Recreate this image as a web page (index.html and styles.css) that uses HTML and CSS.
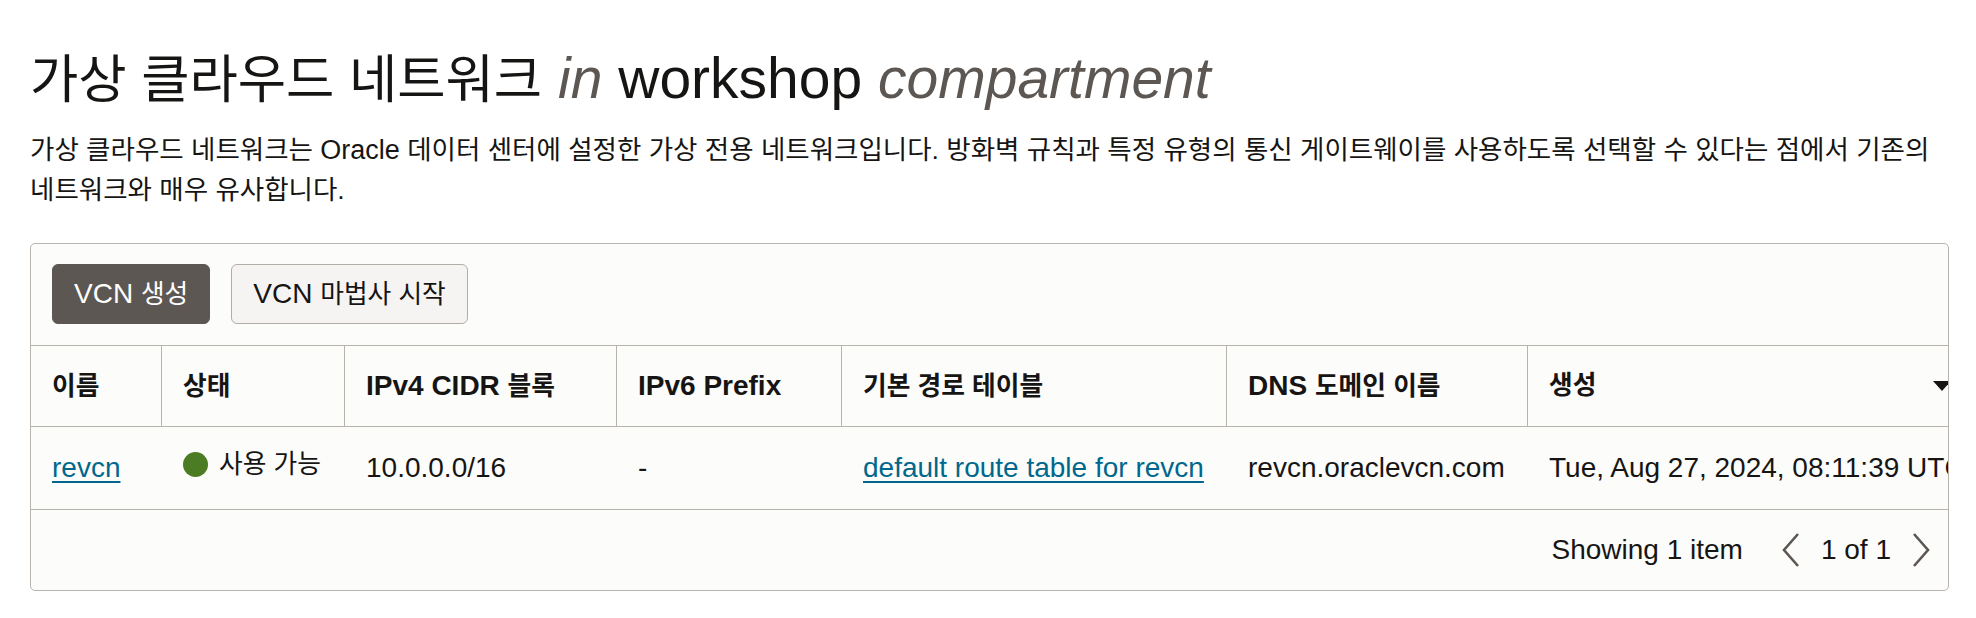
FILE: index.html
```html
<!DOCTYPE html>
<html lang="ko">
<head>
<meta charset="utf-8">
<title>가상 클라우드 네트워크</title>
<link rel="stylesheet" href="styles.css">
</head>
<body>
<div class="page">
  <h1 class="title"><span class="ko">가상 클라우드 네트워크</span> <em>in</em> workshop <em>compartment</em></h1>
  <p class="desc">가상 클라우드 네트워크는 <span class="en">Oracle</span> 데이터 센터에 설정한 가상 전용 네트워크입니다. 방화벽 규칙과 특정 유형의 통신 게이트웨이를 사용하도록 선택할 수 있다는 점에서 기존의 네트워크와 매우 유사합니다.</p>

  <div class="card">
    <div class="toolbar">
      <button class="btn btn-primary">VCN <span class="ko">생성</span></button>
      <button class="btn btn-secondary">VCN <span class="ko">마법사 시작</span></button>
    </div>

    <div class="table-wrap">
      <table class="grid">
        <colgroup>
          <col class="c-name">
          <col class="c-state">
          <col class="c-ipv4">
          <col class="c-ipv6">
          <col class="c-route">
          <col class="c-dns">
          <col class="c-created">
        </colgroup>
        <thead>
          <tr>
            <th><span class="ko">이름</span></th>
            <th><span class="ko">상태</span></th>
            <th>IPv4 CIDR <span class="ko">블록</span></th>
            <th>IPv6 Prefix</th>
            <th><span class="ko">기본 경로 테이블</span></th>
            <th>DNS <span class="ko">도메인 이름</span></th>
            <th class="th-last">
              <div class="th-inner">
                <span class="ko">생성</span>
                <svg class="sort" width="18" height="10" viewBox="0 0 18 10"><polygon points="0,0 18,0 9,10"/></svg>
              </div>
            </th>
          </tr>
        </thead>
        <tbody>
          <tr>
            <td><a href="#" class="link">revcn</a></td>
            <td><span class="status"><span class="dot"></span><span class="ko">사용 가능</span></span></td>
            <td>10.0.0.0/16</td>
            <td>-</td>
            <td><a href="#" class="link">default route table for revcn</a></td>
            <td>revcn.oraclevcn.com</td>
            <td>Tue, Aug 27, 2024, 08:11:39 UTC</td>
          </tr>
        </tbody>
      </table>
    </div>

    <div class="footer">
      <span class="count">Showing 1 item</span>
      <div class="pager">
        <svg class="chev" width="18" height="34" viewBox="0 0 18 34"><polyline points="16,1 2,17 16,33"/></svg>
        <span class="pages">1 of 1</span>
        <svg class="chev" width="18" height="34" viewBox="0 0 18 34"><polyline points="2,1 16,17 2,33"/></svg>
      </div>
    </div>
  </div>
</div>
</body>
</html>
```

FILE: styles.css
```css
html, body {
  margin: 0;
  background: #ffffff;
}

body {
  color: #161513;
  font-family: "Liberation Sans", "Noto Sans CJK KR", sans-serif;
}

.page {
  padding: 43px 27px 0 30px;
}

.ko {
  font-size: 0.92em;
  line-height: 1;
}

.title {
  margin: 0;
  font-size: 57px;
  font-weight: 400;
  line-height: 70px;
  white-space: nowrap;
  color: #161513;
}

.title .ko {
  font-size: 52.5px;
}

.title em {
  font-style: italic;
  color: #5d5753;
}

.desc {
  margin: 17px 0 0;
  font-size: 26.5px;
  line-height: 40px;
}

.desc .en {
  font-size: 27px;
  line-height: 1;
}

.card {
  margin-top: 33px;
  border: 1px solid #b9b3ad;
  border-radius: 5px;
  background: #fcfcfb;
  overflow: hidden;
}

.toolbar {
  display: flex;
  gap: 21px;
  padding: 20px 21px 21px;
  border-bottom: 1px solid #b9b3ad;
}

.btn {
  box-sizing: border-box;
  height: 60px;
  padding: 0 21px;
  font-family: inherit;
  font-size: 28px;
  line-height: 1;
  border-radius: 6px;
  cursor: pointer;
  white-space: nowrap;
}

.btn-primary {
  background: #5d5753;
  border: 1px solid #5d5753;
  color: #ffffff;
}

.btn-secondary {
  background: #f5f4f2;
  border: 1px solid #b3ada7;
  color: #161513;
}

.table-wrap {
  overflow: hidden;
}

.grid {
  border-collapse: separate;
  border-spacing: 0;
  table-layout: fixed;
  width: 1945px;
}

.c-name { width: 131px; }
.c-state { width: 183px; }
.c-ipv4 { width: 272px; }
.c-ipv6 { width: 225px; }
.c-route { width: 385px; }
.c-dns { width: 301px; }
.c-created { width: 448px; }

.grid th,
.grid td {
  box-sizing: border-box;
  padding: 0 21px;
  text-align: left;
  vertical-align: middle;
  font-size: 28px;
  line-height: 34px;
  white-space: nowrap;
}

.grid th {
  height: 81px;
  font-weight: 700;
  border-bottom: 1px solid #b9b3ad;
  border-right: 1px solid #b9b3ad;
}

.grid th.th-last {
  border-right: none;
  padding-right: 25px;
}

.th-inner {
  display: flex;
  align-items: center;
  justify-content: space-between;
}

.sort {
  fill: #161513;
  flex: none;
}

.grid td {
  height: 82px;
  font-weight: 400;
}

.link {
  color: #00688c;
  text-decoration: underline;
  text-decoration-thickness: 2px;
  text-underline-offset: 4px;
}

.status {
  display: inline-flex;
  align-items: center;
  gap: 11px;
}

.dot {
  width: 25px;
  height: 25px;
  border-radius: 50%;
  background: #4b7b22;
  flex: none;
}

.footer {
  display: flex;
  justify-content: flex-end;
  align-items: center;
  height: 80px;
  padding-right: 18px;
  border-top: 1px solid #b9b3ad;
  font-size: 28px;
  line-height: 34px;
}

.count {
  margin-right: 39px;
}

.pager {
  display: flex;
  align-items: center;
  gap: 21px;
}

.chev {
  fill: none;
  stroke: #5d5753;
  stroke-width: 2.6;
  flex: none;
}
```
